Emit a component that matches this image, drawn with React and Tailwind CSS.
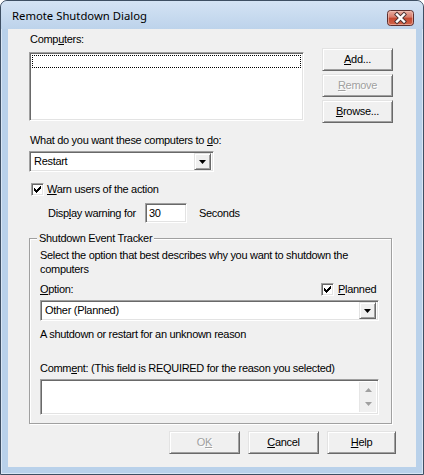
import React from 'react';

const sunken =
  'border border-t-[#a0a0a0] border-l-[#a0a0a0] border-r-white border-b-white shadow-[inset_1px_1px_0_#696969,inset_-1px_-1px_0_#e3e3e3]';
const raised =
  'border border-t-[#e3e3e3] border-l-[#e3e3e3] border-r-[#696969] border-b-[#696969] shadow-[inset_1px_1px_0_#fff,inset_-1px_-1px_0_#a0a0a0] bg-[#f0f0f0]';
const disabledText = 'text-[#a0a0a0] [text-shadow:1px_1px_0_#fff]';

const Btn = ({ children, disabled, className = '' }) => (
  <div className={`${raised} h-[23px] flex items-center justify-center ${disabled ? disabledText : ''} ${className}`}>
    <span>{children}</span>
  </div>
);

const Check = () => (
  <span className={`${sunken} w-[13px] h-[13px] bg-white flex items-center justify-center shrink-0`}>
    <svg width="7" height="7" viewBox="0 0 7 7">
      <path d="M0 2h1v1h1v1h1V3h1V2h1V1h1V0h1v3H6v1H5v1H4v1H3v1H2V6H1V5H0z" fill="#000" />
    </svg>
  </span>
);

const Combo = ({ value, className = '' }) => (
  <div className={`${sunken} bg-white h-[21px] flex items-center p-[2px] ${className}`}>
    <span className="flex-1 pl-[2px] leading-[13px]">{value}</span>
    <div className={`${raised} w-[17px] h-[17px] flex items-center justify-center shrink-0`}>
      <svg width="7" height="4" viewBox="0 0 7 4">
        <path d="M0 0h7L3.5 4z" fill="#000" />
      </svg>
    </div>
  </div>
);

const CloseButton = () => (
  <svg width="27" height="16" viewBox="0 0 27 16">
    <defs>
      <linearGradient id="closeGrad" x1="0" y1="0" x2="0" y2="1">
        <stop offset="0" stopColor="#eab0a4" />
        <stop offset="0.45" stopColor="#d77a69" />
        <stop offset="0.5" stopColor="#c4472f" />
        <stop offset="1" stopColor="#d0674e" />
      </linearGradient>
    </defs>
    <rect x="0.5" y="0.5" width="26" height="15" rx="3" fill="url(#closeGrad)" stroke="#5b2e2e" />
    <rect x="1.5" y="1.5" width="24" height="13" rx="2" fill="none" stroke="#f3c9bd" strokeOpacity="0.6" />
    <g strokeLinecap="square">
      <path d="M10 4.5l7 7M17 4.5l-7 7" stroke="#4b3434" strokeWidth="4.2" />
      <path d="M10 4.5l7 7M17 4.5l-7 7" stroke="#fff" strokeWidth="2.4" />
    </g>
  </svg>
);

const Arrow = ({ up }) => (
  <svg width="7" height="4" viewBox="0 0 7 4">
    <path d={up ? 'M0 4h7L3.5 0z' : 'M0 0h7L3.5 4z'} fill="#a0a0a0" />
  </svg>
);

export default function App() {
  return (
    <div className="w-[424px] h-[475px] bg-[#b9d1ea] border border-[#3e4f63] rounded-t-[7px] flex flex-col shadow-[inset_0_0_0_1px_#d9e6f5] font-['Liberation_Sans',Arial,sans-serif] text-[11px] tracking-[-0.3px] text-black overflow-hidden">
      {/* title bar */}
      <div className="h-[28px] flex items-start pl-[11px] pr-[9px] bg-gradient-to-b from-[#d4e3f4] to-[#bdd3eb] rounded-t-[6px]">
        <span className="mt-[7px] font-['Noto_Sans',sans-serif] text-[11.3px] tracking-normal leading-[16px] text-black">
          Remote Shutdown Dialog
        </span>
        <div className="ml-auto mt-[9px]">
          <CloseButton />
        </div>
      </div>

      {/* client area */}
      <div className="mx-[7px] mb-[7px] flex-1 bg-[#f0f0f0] pt-[4px] pl-[21px]">
        <div className="flex items-start">
          <div className="w-[275px]">
            <div className="h-[13px] leading-[13px] pl-[1px]">
              Comp<u>u</u>ters:
            </div>
            <div className={`${sunken} bg-white mt-[6px] h-[69px] p-[2px]`}>
              <div className="h-[13px] border border-dotted border-black" />
            </div>
          </div>
          <div className="ml-[18px] mt-[15px] w-[71px] flex flex-col gap-[3px]">
            <Btn><u>A</u>dd...</Btn>
            <Btn disabled><u>R</u>emove</Btn>
            <Btn><u>B</u>rowse...</Btn>
          </div>
        </div>

        <div className="mt-[11px] h-[13px] leading-[13px] pl-[1px]">
          What do you want these computers to <u>d</u>o:
        </div>
        <Combo value="Restart" className="mt-[4px] w-[185px]" />

        <div className="mt-[11px] h-[13px] flex items-center pl-[2px]">
          <Check />
          <span className="ml-[3px] leading-[13px]">
            <u>W</u>arn users of the action
          </span>
        </div>

        <div className="mt-[7px] flex items-center pl-[19px]">
          <span className="w-[97px] leading-[13px]">
            Disp<u>l</u>ay warning for
          </span>
          <div className={`${sunken} bg-white w-[42px] h-[20px] flex items-center pl-[3px]`}>30</div>
          <span className="ml-[12px] leading-[13px]">Seconds</span>
        </div>

        {/* group box */}
        <div className="mt-[15px] w-[363px] h-[186px] border border-[#a0a0a0] shadow-[1px_1px_0_#fff,inset_1px_1px_0_#fff] pl-[10px] flex flex-col items-start">
          <span className="-mt-[7px] ml-[-3px] px-[2px] bg-[#f0f0f0] leading-[13px]">Shutdown Event Tracker</span>
          <div className="mt-[3px] leading-[14px] w-[330px]">
            Select the option that best describes why you want to shutdown the computers
          </div>
          <div className="mt-[6px] h-[14px] flex items-center">
            <span className="w-[281px] leading-[13px]">
              <u>O</u>ption:
            </span>
            <Check />
            <span className="ml-[4px] leading-[13px]">
              <u>P</u>lanned
            </span>
          </div>
          <Combo value="Other (Planned)" className="mt-[4px] w-[339px]" />
          <div className="mt-[7px] leading-[13px]">A shutdown or restart for an unknown reason</div>
          <div className="mt-[21px] leading-[13px]">
            Comm<u>e</u>nt: (This field is REQUIRED for the reason you selected)
          </div>
          <div className={`${sunken} bg-white mt-[4px] w-[339px] h-[36px] p-[2px] flex justify-end`}>
            <div className="w-[17px] h-full bg-[#f0f0f0] border-l border-[#e6e6e6] flex flex-col justify-between items-center py-[6px]">
              <Arrow up />
              <Arrow />
            </div>
          </div>
        </div>

        <div className="mt-[7px] flex gap-[8px] pl-[140px]">
          <Btn disabled className="w-[71px]">O<u>K</u></Btn>
          <Btn className="w-[71px]"><u>C</u>ancel</Btn>
          <Btn className="w-[69px]"><u>H</u>elp</Btn>
        </div>
      </div>
    </div>
  );
}
